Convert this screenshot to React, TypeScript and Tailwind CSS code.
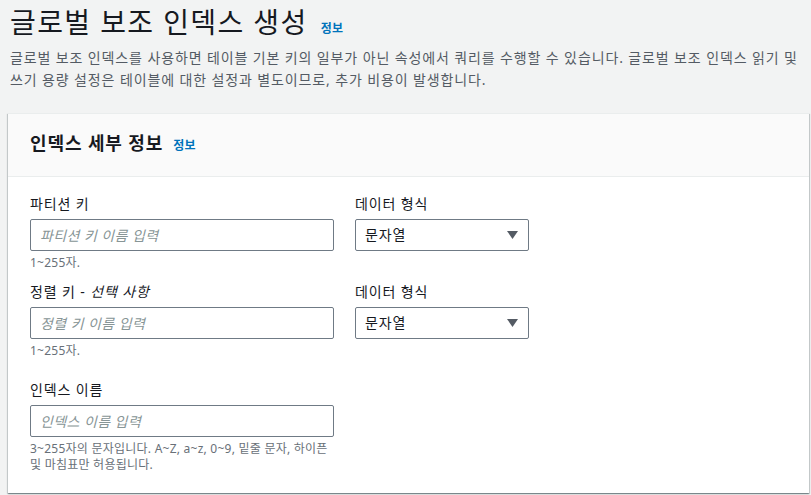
import { ChangeEvent, useState } from "react";

const FONT = "font-['Noto_Sans','Noto_Sans_CJK_KR',sans-serif]";

function InfoLink({ size = "text-xs" }: { size?: string }) {
  return (
    <a href="#" className={`${size} font-bold tracking-[0.02em] text-[#0073bb] hover:underline`}>
      정보
    </a>
  );
}

function TextField({
  label,
  placeholder,
  hint,
  value,
  onChange,
}: {
  label: React.ReactNode;
  placeholder: string;
  hint: string;
  value: string;
  onChange: (e: ChangeEvent<HTMLInputElement>) => void;
}) {
  return (
    <div className="w-[304px]">
      <label className="mb-1 block text-sm leading-[22px] text-[#16191f]">{label}</label>
      <input
        value={value}
        onChange={onChange}
        placeholder={placeholder}
        className="block h-8 w-full rounded-[2px] border border-[#6f7a85] bg-white px-[9px] text-sm tracking-[0.03em] text-[#16191f] placeholder:italic placeholder:text-[#879596] focus:outline-none"
      />
      <p className="mt-1 break-keep text-xs leading-[16px] tracking-[0.02em] text-[#687078]">{hint}</p>
    </div>
  );
}

function TypeSelect({ value }: { value: string }) {
  return (
    <div className="w-[174px]">
      <label className="mb-1 block text-sm leading-[22px] text-[#16191f]">데이터 형식</label>
      <button
        type="button"
        className="flex h-8 w-full items-center justify-between rounded-[2px] border border-[#6f7a85] bg-white pl-[9px] pr-[10px] text-sm text-[#16191f]"
      >
        <span>{value}</span>
        <svg width="11" height="8" viewBox="0 0 11 8">
          <path d="M0 0h11L5.5 8z" fill="#545b64" />
        </svg>
      </button>
    </div>
  );
}

export default function App() {
  const [form, setForm] = useState({ partition: "", sort: "", name: "" });

  function handleChange(key: "partition" | "sort" | "name") {
    return (e: ChangeEvent<HTMLInputElement>) => setForm({ ...form, [key]: e.target.value });
  }

  return (
    <div className={`${FONT} min-h-[495px] bg-[#f2f3f3] pb-1 pl-2 pr-[2px] pt-1 tracking-[0.055em]`}>
      <div className="px-[2px]">
        <div className="flex items-baseline gap-[13px]">
          <h1 className="text-[28px] leading-[36px] font-normal tracking-[0.05em] text-[#16191f]">글로벌 보조 인덱스 생성</h1>
          <InfoLink />
        </div>
        <p className="mt-[7px] text-sm leading-[22px] text-[#545b64]">
          글로벌 보조 인덱스를 사용하면 테이블 기본 키의 일부가 아닌 속성에서 쿼리를 수행할 수 있습니다. 글로벌 보조 인덱스 읽기 및
          <br />
          쓰기 용량 설정은 테이블에 대한 설정과 별도이므로, 추가 비용이 발생합니다.
        </p>
      </div>

      <section className="mt-[22px] border-t border-[#eaeded] bg-white shadow-[0_1px_1px_0_rgba(0,28,36,0.3),1px_1px_1px_0_rgba(0,28,36,0.15),-1px_1px_1px_0_rgba(0,28,36,0.15)]">
        <div className="flex items-baseline gap-[10px] border-b border-[#eaeded] bg-[#fafafa] pb-5 pl-[22px] pt-4">
          <h2 className="text-lg leading-[26px] font-bold text-[#16191f]">인덱스 세부 정보</h2>
          <InfoLink />
        </div>

        <div className="pb-5 pl-[22px] pt-4">
          <div className="flex flex-col gap-[10px]">
            <div className="flex gap-[21px]">
              <TextField
                label="파티션 키"
                placeholder="파티션 키 이름 입력"
                hint="1~255자."
                value={form.partition}
                onChange={handleChange("partition")}
              />
              <TypeSelect value="문자열" />
            </div>
            <div className="flex gap-[21px]">
              <TextField
                label={
                  <>
                    정렬 키 - <i>선택 사항</i>
                  </>
                }
                placeholder="정렬 키 이름 입력"
                hint="1~255자."
                value={form.sort}
                onChange={handleChange("sort")}
              />
              <TypeSelect value="문자열" />
            </div>
          </div>

          <div className="mt-5">
            <TextField
              label="인덱스 이름"
              placeholder="인덱스 이름 입력"
              hint="3~255자의 문자입니다. A~Z, a~z, 0~9, 밑줄 문자, 하이픈 및 마침표만 허용됩니다."
              value={form.name}
              onChange={handleChange("name")}
            />
          </div>
        </div>
      </section>
    </div>
  );
}
